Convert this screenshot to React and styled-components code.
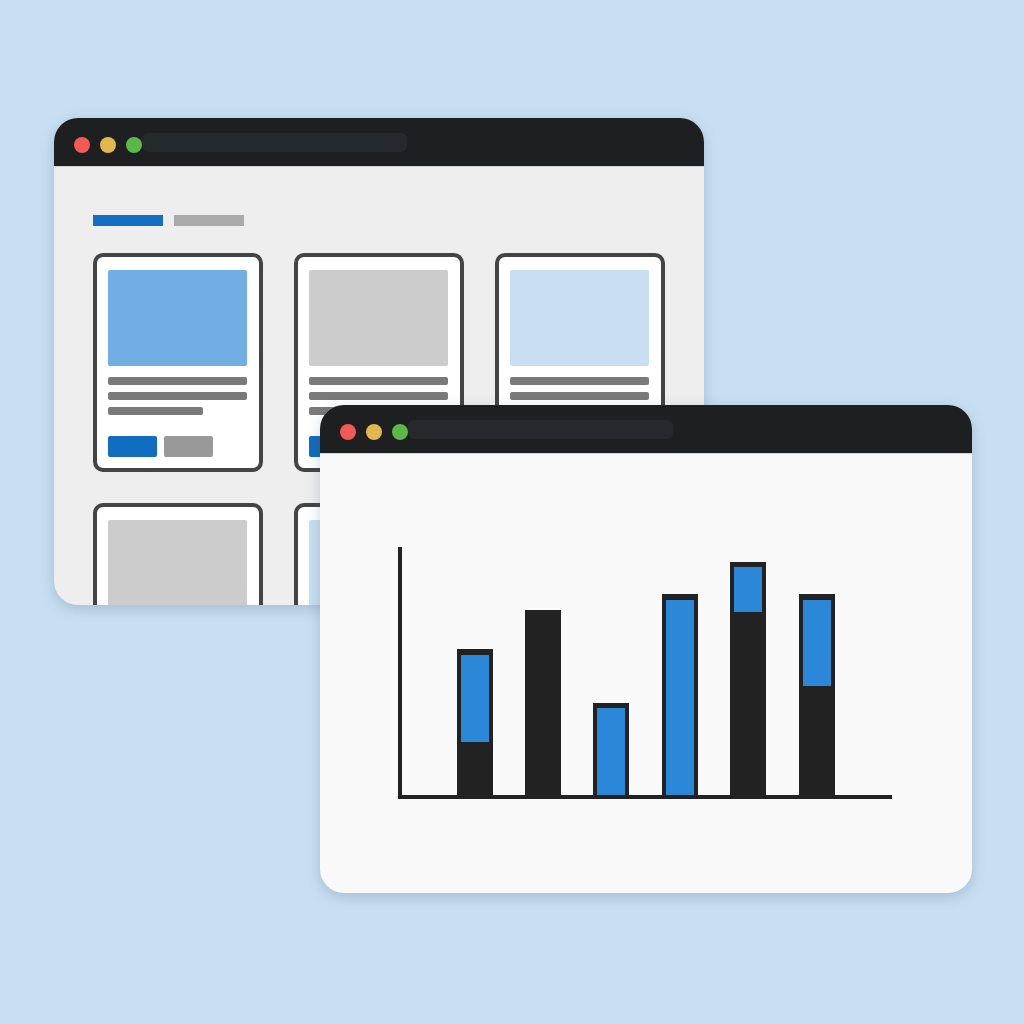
import React from 'react';
import styled, { createGlobalStyle } from 'styled-components';

const GlobalStyle = createGlobalStyle`
  html, body {
    margin: 0;
    padding: 0;
    background: #c8dff3;
    font-family: "Liberation Sans", Arial, sans-serif;
  }
`;

const Desktop = styled.div`
  position: relative;
  width: 1024px;
  height: 1024px;
  overflow: hidden;
  background: #c8dff3;
`;

const Window = styled.div`
  position: absolute;
  left: ${({ x }) => x}px;
  top: ${({ y }) => y}px;
  width: ${({ w }) => w}px;
  height: ${({ h }) => h}px;
  z-index: ${({ z }) => z};
  border-radius: 24px;
  overflow: hidden;
  display: flex;
  flex-direction: column;
  background: ${({ bg }) => bg};
  box-shadow: 0 4px 14px rgba(40, 70, 100, 0.22);
`;

const TitleBar = styled.div`
  flex: 0 0 49px;
  display: flex;
  align-items: flex-start;
  padding: 19px 0 0 20px;
  box-sizing: border-box;
  background: #1e1f21;
  border-bottom: 1px solid #d4d4d4;
`;

const Dot = styled.span`
  width: 16px;
  height: 16px;
  border-radius: 50%;
  margin-right: 10px;
  background: ${({ color }) => color};
  &:last-of-type {
    margin-right: 0;
  }
`;

const AddressBar = styled.div`
  width: 265px;
  height: 19px;
  border-radius: 6px;
  background: #26292c;
  margin-top: -4px;
`;

const Content = styled.div`
  flex: 1;
  padding: 48px 39px 0;
  box-sizing: border-box;
`;

const Tabs = styled.div`
  display: flex;
  gap: 11px;
  margin-bottom: 27px;
`;

const Tab = styled.div`
  width: 70px;
  height: 11px;
  background: ${({ active }) => (active ? '#136fc1' : '#aaaaaa')};
`;

const Grid = styled.div`
  display: grid;
  grid-template-columns: repeat(3, 170px);
  column-gap: 31px;
  row-gap: 31px;
`;

const Card = styled.div`
  height: 219px;
  box-sizing: border-box;
  border: 4px solid #444444;
  border-radius: 10px;
  background: #ffffff;
  padding: 13px 12px 11px 11px;
  display: flex;
  flex-direction: column;
`;

const Thumb = styled.div`
  height: 96px;
  border-radius: 2px;
  background: ${({ tone }) => tone};
  margin-bottom: 11px;
  flex-shrink: 0;
`;

const Line = styled.div`
  height: 8px;
  border-radius: 2px;
  background: #7a7a7a;
  width: ${({ short }) => (short ? '95px' : '100%')};
  margin-bottom: 7px;
  flex-shrink: 0;
`;

const Buttons = styled.div`
  margin-top: auto;
  display: flex;
  gap: 7px;
`;

const Btn = styled.div`
  width: 49px;
  height: 21px;
  border-radius: 2px;
  background: ${({ primary }) => (primary ? '#116dbf' : '#999999')};
`;

const ChartArea = styled.div`
  flex: 1;
  display: flex;
`;

const cards = ['#72aee4', '#cccccc', '#c8dff3', '#cccccc', '#c8dff3', '#cccccc'];

const bars = [
  { x: 137, top: 195, blue: [201, 288] },
  { x: 205, top: 156, blue: null },
  { x: 273, top: 249, blue: [254, 341] },
  { x: 342, top: 140, blue: [146, 341] },
  { x: 410, top: 108, blue: [113, 158] },
  { x: 479, top: 140, blue: [146, 232] },
];

function TitleRow() {
  return (
    <TitleBar>
      <Dot color="#f25a53" />
      <Dot color="#e2b84e" />
      <Dot color="#59b847" />
      <AddressBar />
    </TitleBar>
  );
}

function Chart() {
  return (
    <svg width="652" height="439" viewBox="0 0 652 439">
      {bars.map((b) => (
        <g key={b.x}>
          <rect x={b.x} y={b.top} width="36" height={341 - b.top} fill="#222222" />
          {b.blue && (
            <rect x={b.x + 4} y={b.blue[0]} width="28" height={b.blue[1] - b.blue[0]} fill="#2b88d8" />
          )}
        </g>
      ))}
      <rect x="78" y="93" width="4" height="252" fill="#222222" />
      <rect x="78" y="341" width="494" height="4" fill="#222222" />
    </svg>
  );
}

export default function App() {
  return (
    <Desktop>
      <GlobalStyle />
      <Window x={54} y={118} w={650} h={487} z={1} bg="#eeeeee">
        <TitleRow />
        <Content>
          <Tabs>
            <Tab active />
            <Tab />
          </Tabs>
          <Grid>
            {cards.map((tone, i) => (
              <Card key={i}>
                <Thumb tone={tone} />
                <Line />
                <Line />
                <Line short />
                <Buttons>
                  <Btn primary />
                  <Btn />
                </Buttons>
              </Card>
            ))}
          </Grid>
        </Content>
      </Window>
      <Window x={320} y={405} w={652} h={488} z={2} bg="#f9f9f9">
        <TitleRow />
        <ChartArea>
          <Chart />
        </ChartArea>
      </Window>
    </Desktop>
  );
}
